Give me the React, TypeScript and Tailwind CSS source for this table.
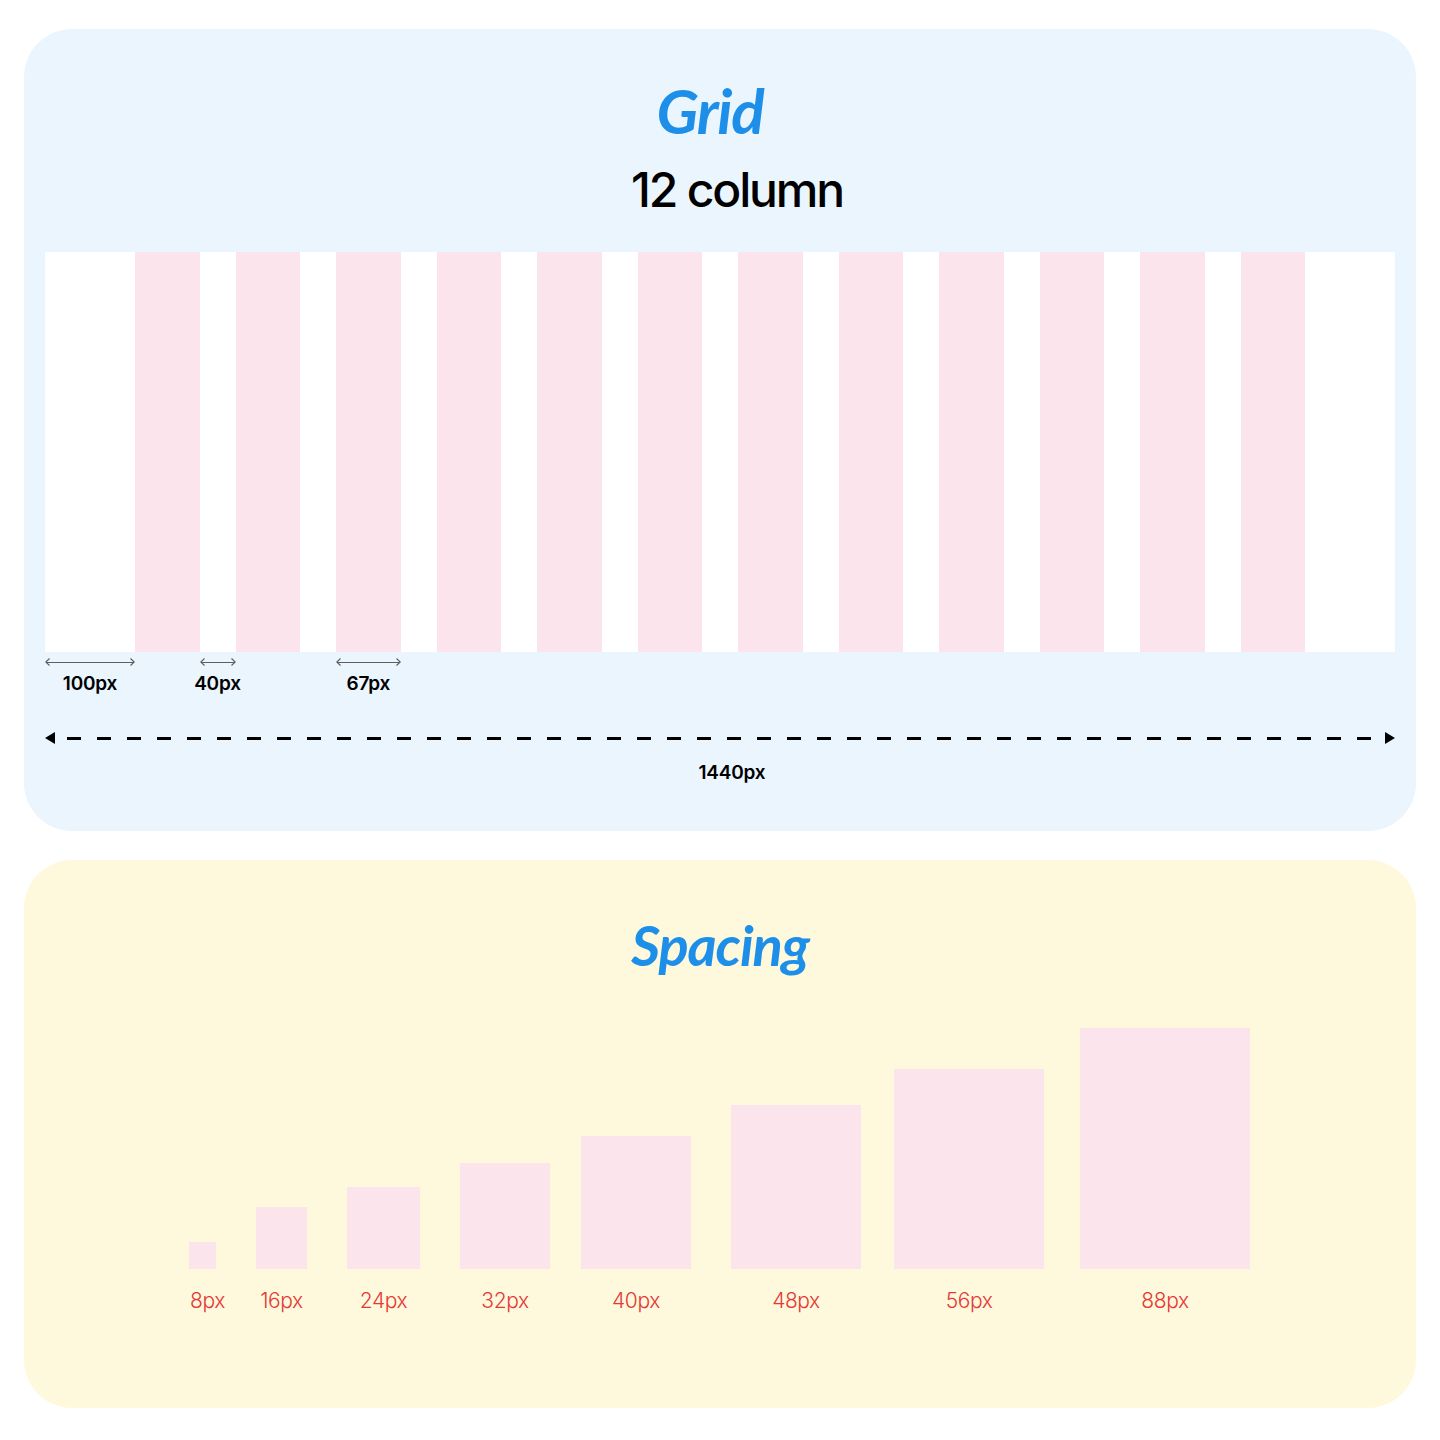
import React from "react";

const FONT = { fontFamily: "Inter, 'Noto Sans', sans-serif" };
const SCRIPT = { fontFamily: "Lato, 'Noto Sans', sans-serif" };

function SmallArrow() {
  return (
    <div className="flex items-center w-full h-[8px] text-[#5f5f5f]">
      <svg width="5" height="8" viewBox="0 0 5 8" className="shrink-0">
        <path d="M4.5 0.5 L0.8 4 L4.5 7.5" fill="none" stroke="currentColor" strokeWidth="1.1" />
      </svg>
      <div className="flex-1 h-px bg-[#5f5f5f] -mx-[4px]" />
      <svg width="5" height="8" viewBox="0 0 5 8" className="shrink-0">
        <path d="M0.5 0.5 L4.2 4 L0.5 7.5" fill="none" stroke="currentColor" strokeWidth="1.1" />
      </svg>
    </div>
  );
}

function Measure({ label }: { label: string }) {
  return (
    <div className="flex flex-col items-center w-full pt-[6px]">
      <SmallArrow />
      <div className="mt-[7px] text-[19px] font-semibold text-black leading-[22px] whitespace-nowrap tracking-[-0.01em]" style={FONT}>
        {label}
      </div>
    </div>
  );
}

export default function App() {
  const cols = Array.from({ length: 12 }, (_, i) => i);

  const gridCells: React.ReactNode[] = [];
  cols.forEach((i) => {
    gridCells.push(<div key={"c" + i} className="flex-1 bg-[#FCE4EC]" />);
    if (i < 11) gridCells.push(<div key={"g" + i} className="w-[36px] shrink-0" />);
  });

  const measureCells: React.ReactNode[] = [];
  cols.forEach((i) => {
    measureCells.push(
      <div key={"c" + i} className="flex-1 flex justify-center">
        {i === 2 ? <Measure label="67px" /> : null}
      </div>
    );
    if (i < 11)
      measureCells.push(
        <div key={"g" + i} className="w-[36px] shrink-0 flex justify-center">
          {i === 0 ? <Measure label="40px" /> : null}
        </div>
      );
  });

  const spacing = [
    { label: "8px", w: 27, h: 27, ml: 0 },
    { label: "16px", w: 51, h: 62, ml: 40 },
    { label: "24px", w: 73, h: 82, ml: 40 },
    { label: "32px", w: 90, h: 106, ml: 40 },
    { label: "40px", w: 110, h: 133, ml: 31 },
    { label: "48px", w: 130, h: 164, ml: 40 },
    { label: "56px", w: 150, h: 200, ml: 33 },
    { label: "88px", w: 170, h: 241, ml: 36 },
  ];

  return (
    <div className="w-[1440px] min-h-[1440px] bg-white pt-[29px] px-[24px]" style={FONT}>
      {/* Grid panel */}
      <div className="h-[802px] rounded-[48px] bg-[#EAF5FE] flex flex-col">
        <div className="pt-[41px] h-[121px] flex items-end justify-center pr-[20px]">
          <div
            className="h-[80px] flex items-center text-[62px] font-bold italic text-[#1E8FE8] leading-none tracking-[-0.02em]"
            style={SCRIPT}
          >
            Grid
          </div>
        </div>
        <div className="mt-[10px] h-[60px] flex items-center justify-center pl-[34px]">
          <div className="text-[48px] font-medium text-black leading-none tracking-[-0.045em]" style={FONT}>
            12 column
          </div>
        </div>
        <div className="mt-[32px] mx-[21px] h-[400px] bg-white flex">
          <div className="w-[90px] shrink-0" />
          <div className="flex-1 flex">{gridCells}</div>
          <div className="w-[90px] shrink-0" />
        </div>
        <div className="mx-[21px] flex">
          <div className="w-[90px] shrink-0 flex justify-center">
            <Measure label="100px" />
          </div>
          <div className="flex-1 flex">{measureCells}</div>
          <div className="w-[90px] shrink-0" />
        </div>
        <div className="mx-[21px] mt-[37px] flex items-center h-[12px]">
          <svg width="10" height="12" viewBox="0 0 10 12" className="shrink-0">
            <path d="M0 6 L10 0 L10 12 Z" fill="#000" />
          </svg>
          <div className="flex-1 mx-[12px] h-[3px] bg-[repeating-linear-gradient(to_right,#000_0px,#000_14px,transparent_14px,transparent_30px)]" />
          <svg width="10" height="12" viewBox="0 0 10 12" className="shrink-0">
            <path d="M10 6 L0 0 L0 12 Z" fill="#000" />
          </svg>
        </div>
        <div className="mt-[18px] flex justify-center pl-[24px]">
          <div className="text-[19px] font-semibold text-black leading-[22px] tracking-[-0.01em]" style={FONT}>
            1440px
          </div>
        </div>
      </div>

      {/* Spacing panel */}
      <div className="mt-[29px] h-[548px] rounded-[48px] bg-[#FEF8DC] flex flex-col">
        <div className="pt-[45px] h-[125px] flex items-end justify-center">
          <div
            className="h-[80px] flex items-center text-[56px] font-bold italic text-[#1E8FE8] leading-none tracking-[-0.02em]"
            style={SCRIPT}
          >
            Spacing
          </div>
        </div>
        <div className="mt-[43px] h-[241px] pl-[165px] flex items-end">
          {spacing.map((s) => (
            <div
              key={s.label}
              className="shrink-0 flex flex-col items-center"
              style={{ width: s.w, marginLeft: s.ml }}
            >
              <div className="bg-[#FCE4EC] w-full" style={{ height: s.h }} />
            </div>
          ))}
        </div>
        <div className="mt-[19px] pl-[165px] flex">
          {spacing.map((s, i) => (
            <div
              key={s.label}
              className={i === 0 ? "shrink-0 flex justify-center pl-[10px]" : "shrink-0 flex justify-center"}
              style={{ width: s.w, marginLeft: s.ml }}
            >
              <div className="text-[21px] font-light text-[#E53935] leading-[26px] whitespace-nowrap tracking-[-0.02em]" style={FONT}>
                {s.label}
              </div>
            </div>
          ))}
        </div>
      </div>
    </div>
  );
}
